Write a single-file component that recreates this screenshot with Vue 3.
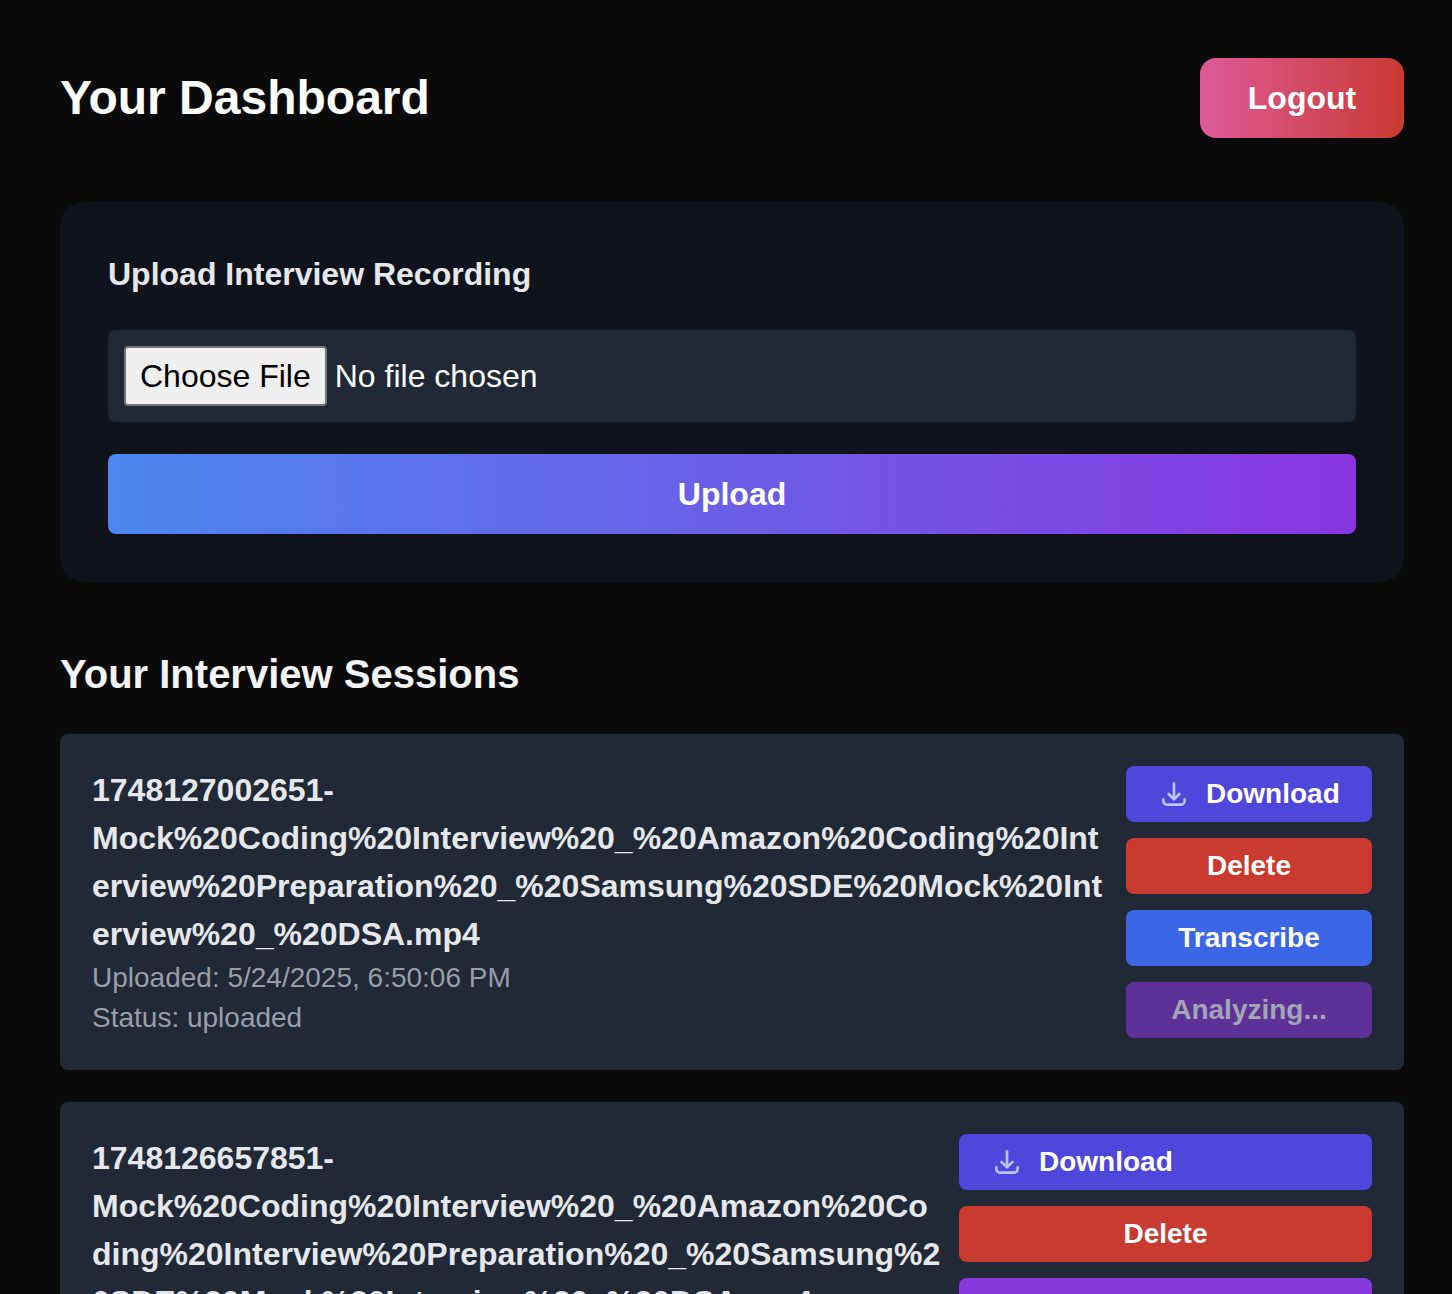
<script setup>
const sessions = [
  {
    name: '1748127002651-Mock%20Coding%20Interview%20_%20Amazon%20Coding%20Interview%20Preparation%20_%20Samsung%20SDE%20Mock%20Interview%20_%20DSA.mp4',
    uploaded: '5/24/2025, 6:50:06 PM',
    status: 'uploaded',
    wide: false,
    buttons: [
      { label: 'Delete', kind: 'delete' },
      { label: 'Transcribe', kind: 'transcribe' },
      { label: 'Analyzing...', kind: 'analyzing', disabled: true }
    ]
  },
  {
    name: '1748126657851-Mock%20Coding%20Interview%20_%20Amazon%20Coding%20Interview%20Preparation%20_%20Samsung%20SDE%20Mock%20Interview%20_%20DSA.mp4',
    uploaded: '5/24/2025, 6:44:17 PM',
    status: 'transcribed',
    wide: true,
    buttons: [
      { label: 'Delete', kind: 'delete' },
      { label: 'Analyze Transcript', kind: 'analyze' }
    ]
  }
]
</script>

<template>
  <div class="dashboard">
    <header class="dashboard__header">
      <h1>Your Dashboard</h1>
      <button class="logout">Logout</button>
    </header>

    <section class="upload-card">
      <h2>Upload Interview Recording</h2>
      <input class="file-input" type="file" />
      <button class="upload-btn">Upload</button>
    </section>

    <h2 class="sessions-title">Your Interview Sessions</h2>

    <article v-for="s in sessions" :key="s.name" class="session">
      <div class="session__info">
        <h3>{{ s.name }}</h3>
        <p>Uploaded: {{ s.uploaded }}</p>
        <p>Status: {{ s.status }}</p>
      </div>
      <div :class="['session__actions', { 'session__actions--wide': s.wide }]">
        <button class="action action--download">
          <svg viewBox="0 0 24 24" fill="none" stroke="currentColor" stroke-width="2" stroke-linecap="round" stroke-linejoin="round">
            <path d="M4 16v1a3 3 0 0 0 3 3h10a3 3 0 0 0 3-3v-1m-4-4-4 4m0 0-4-4m4 4V4" />
          </svg>
          <span>Download</span>
        </button>
        <button
          v-for="b in s.buttons"
          :key="b.label"
          :class="['action', `action--${b.kind}`]"
          :disabled="b.disabled"
        >
          {{ b.label }}
        </button>
      </div>
    </article>
  </div>
</template>

<style>
html, body {
  margin: 0;
  height: 100vh;
  overflow: hidden;
  background: #0a0a0a;
}
</style>

<style scoped>
.dashboard {
  padding: 58px 48px 0 60px;
  font-family: "Liberation Sans", Arial, sans-serif;
  color: #fff;
}

.dashboard__header {
  display: flex;
  justify-content: space-between;
  align-items: center;
  margin-bottom: 64px;
}

h1 {
  margin: 0;
  font-size: 48px;
  font-weight: 700;
  line-height: 80px;
}

h2, h3, p {
  margin: 0;
}

button {
  border: none;
  font-family: inherit;
  font-weight: 700;
  color: #fff;
}

.logout {
  width: 204px;
  height: 80px;
  border-radius: 16px;
  font-size: 32px;
  background: linear-gradient(90deg, #dd5a98, #c93a31);
}

.upload-card {
  padding: 48px;
  border-radius: 24px;
  background: #10131c;
  margin-bottom: 64px;
}

.upload-card h2 {
  font-size: 32px;
  line-height: 48px;
  color: #e5e7eb;
  margin-bottom: 32px;
}

.file-input {
  display: block;
  box-sizing: border-box;
  width: 100%;
  height: 92px;
  padding: 16px;
  border-radius: 8px;
  background: #212836;
  color: #fff;
  font-family: inherit;
  font-size: 32px;
  line-height: 60px;
  margin-bottom: 32px;
}

.file-input::file-selector-button {
  height: 60px;
  padding: 0 14px;
  margin: 0 8px 0 0;
  border: 2px solid #767676;
  border-radius: 4px;
  background: #efefef;
  color: #000;
  font-family: inherit;
  font-size: 32px;
  vertical-align: top;
}

.upload-btn {
  display: block;
  width: 100%;
  height: 80px;
  border-radius: 8px;
  font-size: 32px;
  background: linear-gradient(90deg, #4c86ee, #8a36e0);
}

.sessions-title {
  font-size: 40px;
  line-height: 56px;
  color: #f3f4f6;
  margin-bottom: 32px;
}

.session {
  display: flex;
  gap: 16px;
  justify-content: space-between;
  padding: 32px;
  border-radius: 8px;
  background: #212836;
  margin-bottom: 32px;
}

.session__info {
  flex: 1;
  min-width: 0;
}

.session__info h3 {
  font-size: 32px;
  line-height: 48px;
  font-weight: 700;
  color: #e5e7eb;
  overflow-wrap: anywhere;
}

.session__info p {
  font-size: 28px;
  line-height: 40px;
  color: #9a9ea8;
}

.session__actions {
  flex: none;
  width: 246px;
  display: flex;
  flex-direction: column;
  gap: 16px;
}

.session__actions--wide {
  width: 413px;
}

.action {
  height: 56px;
  padding: 0 32px;
  border-radius: 8px;
  font-size: 28px;
  line-height: 32px;
}

.action--download {
  display: flex;
  align-items: center;
  background: #4f46dc;
}

.action--download svg {
  width: 32px;
  height: 32px;
  margin-right: 16px;
  color: #bcc3fb;
}

.action--delete {
  background: #c93a31;
}

.action--transcribe {
  background: #3b66e6;
}

.action--analyze {
  background: #8839dd;
}

.action--analyzing {
  background: #5e3199;
  color: #a3a5b6;
}
</style>
